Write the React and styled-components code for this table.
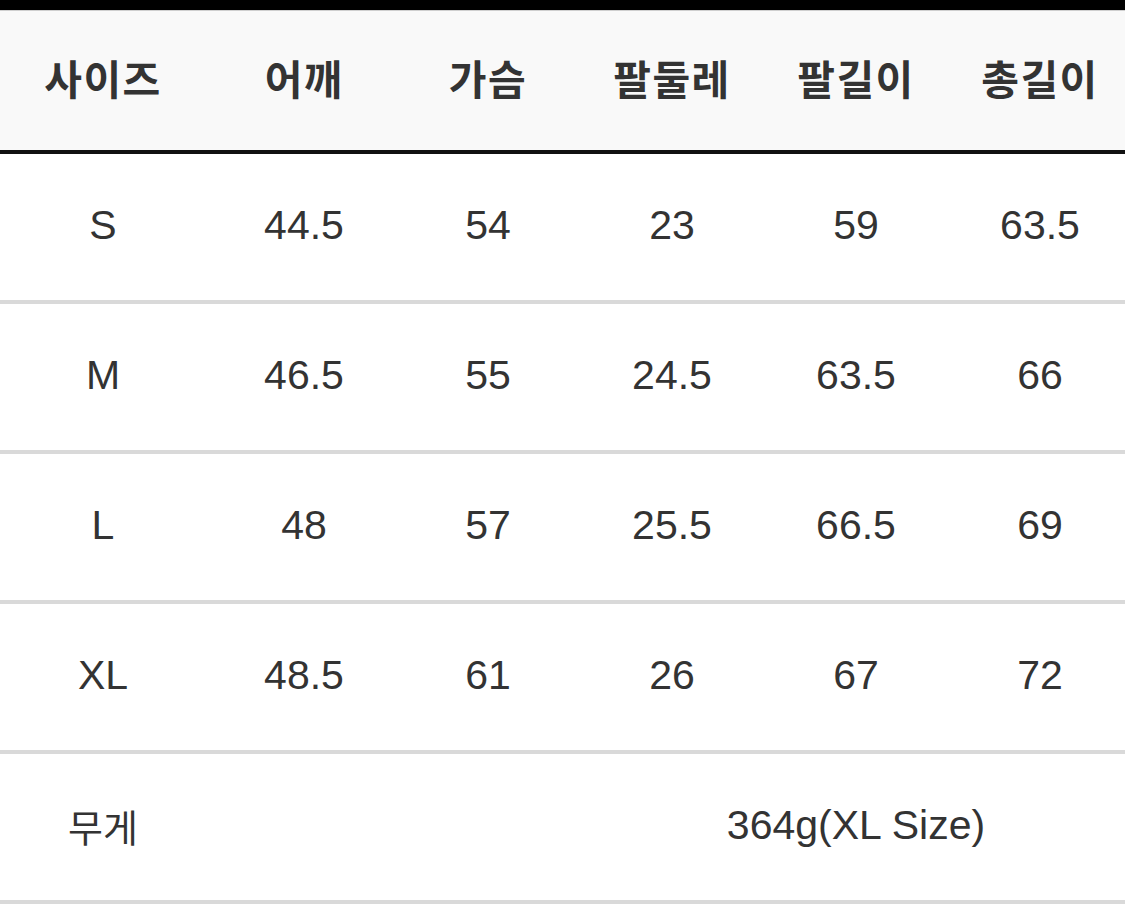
import React from "react";
import styled, { createGlobalStyle } from "styled-components";

const GlobalStyle = createGlobalStyle`
  html, body {
    margin: 0;
    padding: 0;
    background: #ffffff;
  }
  body {
    font-family: "Liberation Sans", "Noto Sans CJK KR", Arial, sans-serif;
    color: #333333;
    overflow: hidden;
  }
`;

const Page = styled.div`
  width: 1125px;
  height: 911px;
  overflow: hidden;
  background: #fff;
`;

const Table = styled.div`
  width: 1132px;
  border-top: 10px solid #000;
`;

const Row = styled.div`
  box-sizing: border-box;
  display: grid;
  grid-template-columns: 212px repeat(5, 184px);
  align-items: center;
  height: ${(p) => (p.$head ? "144px" : "150px")};
  padding-bottom: ${(p) => (p.$head ? "8px" : "4px")};
  background: ${(p) => (p.$head ? "#f9f9f9" : "#ffffff")};
  border-top: ${(p) => (p.$head ? "1px solid #cfcfcf" : "none")};
  border-bottom: ${(p) => (p.$head ? "4px solid #111111" : "4px solid #d9d9d9")};

  & > :first-child {
    padding-right: 6px;
  }
`;

const HeadCell = styled.div`
  text-align: center;
  font-family: "Noto Sans CJK KR", "Liberation Sans", sans-serif;
  font-weight: 700;
  font-size: 41px;
  color: #333;
  letter-spacing: 1.5px;
`;

const Cell = styled.div`
  text-align: center;
  font-family: "Liberation Sans", "Noto Sans CJK KR", sans-serif;
  font-size: 41px;
  color: #333;
  grid-column: ${(p) => p.$span || "auto"};
  white-space: nowrap;
`;

const Label = styled(Cell)`
  font-family: "Noto Sans CJK KR", "Liberation Sans", sans-serif;
  font-size: 38px;
`;

const heads = ["사이즈", "어깨", "가슴", "팔둘레", "팔길이", "총길이"];

const sizes = [
  ["S", "44.5", "54", "23", "59", "63.5"],
  ["M", "46.5", "55", "24.5", "63.5", "66"],
  ["L", "48", "57", "25.5", "66.5", "69"],
  ["XL", "48.5", "61", "26", "67", "72"],
];

export default function App() {
  return (
    <Page>
      <GlobalStyle />
      <Table>
        <Row $head>
          {heads.map((h) => (
            <HeadCell key={h}>{h}</HeadCell>
          ))}
        </Row>
        {sizes.map((row) => (
          <Row key={row[0]}>
            {row.map((v, i) => (
              <Cell key={i}>{v}</Cell>
            ))}
          </Row>
        ))}
        <Row>
          <Label>무게</Label>
          <Cell $span="4 / 7">364g(XL Size)</Cell>
        </Row>
      </Table>
    </Page>
  );
}
